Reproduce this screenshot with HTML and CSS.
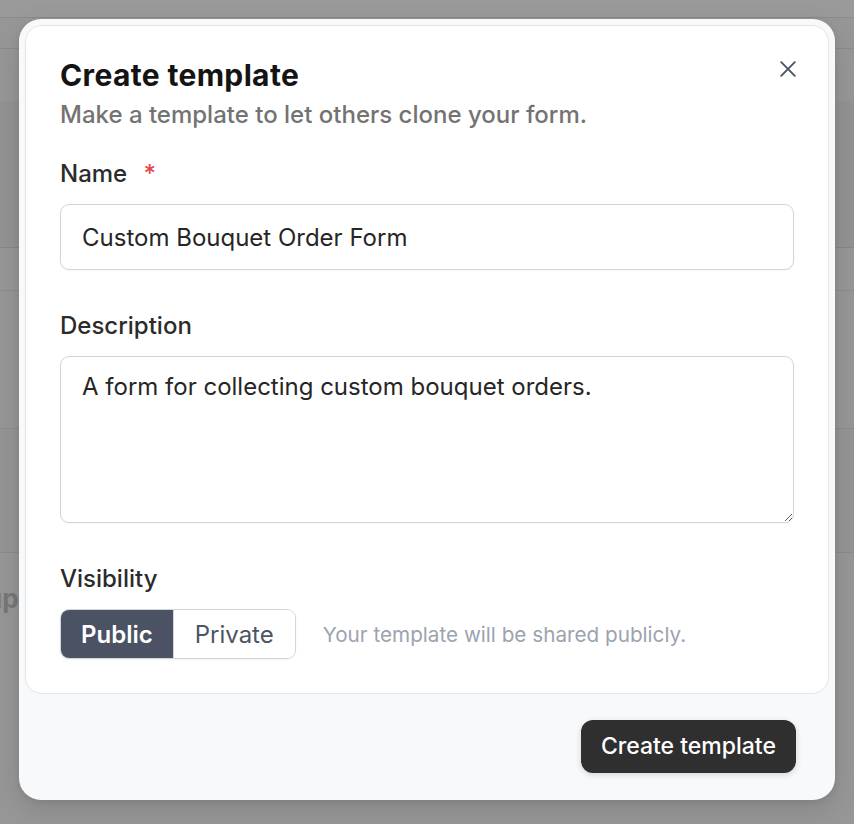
FILE: index.html
```html
<!DOCTYPE html>
<html lang="en">
<head>
<meta charset="utf-8">
<title>Create template</title>
<link rel="stylesheet" href="styles.css">
</head>
<body>
<div class="page">
  <div class="bg-header"></div>
  <div class="bg-row r1"></div>
  <div class="bg-row r2"></div>
  <div class="bg-row r3"></div>
  <div class="bg-row r4"></div>
  <div class="bg-row r5"></div>
  <div class="bg-row r6"></div>
  <div class="bg-row r7"><span class="bg-text">Setup</span></div>
</div>

<div class="modal" role="dialog" aria-labelledby="modal-title">
  <div class="card">
    <button class="close" aria-label="Close">
      <svg width="16" height="16" viewBox="0 0 16 16" fill="none" stroke="currentColor" stroke-width="1.9" stroke-linecap="round"><path d="M1.2 1.2L14.8 14.8M14.8 1.2L1.2 14.8"/></svg>
    </button>
    <h1 id="modal-title" class="title">Create template</h1>
    <p class="subtitle">Make a template to let others clone your form.</p>

    <label class="label label-name" for="name">Name <span class="req">*</span></label>
    <input id="name" class="input" type="text" value="Custom Bouquet Order Form">

    <label class="label label-desc" for="desc">Description</label>
    <textarea id="desc" class="textarea">A form for collecting custom bouquet orders.</textarea>

    <div class="label label-vis">Visibility</div>
    <div class="vis-row">
      <div class="segmented">
        <button class="seg seg-active">Public</button>
        <button class="seg">Private</button>
      </div>
      <span class="helper">Your template will be shared publicly.</span>
    </div>
  </div>
  <div class="footer">
    <button class="primary">Create template</button>
  </div>
</div>
</body>
</html>
```

FILE: styles.css
```css
* { box-sizing: border-box; }
html, body { margin: 0; padding: 0; }
body {
  width: 854px;
  height: 824px;
  overflow: hidden;
  background: #979797;
  font-family: Inter, "Noto Sans", "Liberation Sans", sans-serif;
  position: relative;
}

/* dimmed page behind the overlay */
.page { width: 100%; }
.bg-header { height: 18px; background: #9a9a9a; border-bottom: 1px solid #8b8b8b; }
.bg-row { border-bottom: 1px solid #8c8c8c; background: #979797; }
.r1 { height: 31px; }
.r2 { height: 52px; border-bottom: none; }
.r3 { height: 147px; background: #939393; border-bottom-color: #888; }
.r4 { height: 43px; }
.r5 { height: 138px; }
.r6 { height: 124px; background: #959595; }
.r7 { height: 280px; position: relative; }
.bg-text { position: absolute; left: -56px; top: 30px; font-size: 26px; font-weight: 700; color: #777; }

/* modal */
.modal {
  position: absolute;
  left: 19px;
  top: 19px;
  width: 816px;
  height: 781px;
  background: #f8f9fa;
  border-radius: 22px;
  padding: 6px 6px 0 6px;
  display: flex;
  flex-direction: column;
  box-shadow: 0 10px 30px rgba(0,0,0,0.12), 0 2px 6px rgba(0,0,0,0.08);
}
.card {
  position: relative;
  background: #fff;
  border: 1.5px solid #e4e5e7;
  border-radius: 17px;
  padding: 31px 34px 34px 34px;
  display: flex;
  flex-direction: column;
}
.close {
  position: absolute;
  top: 35px;
  right: 32px;
  width: 16px;
  height: 16px;
  padding: 0;
  border: none;
  background: none;
  color: #4b5563;
  display: flex;
}
.title {
  margin: 0;
  font-size: 30px;
  line-height: 36px;
  font-weight: 700;
  color: #141414;
  letter-spacing: 0.35px;
}
.subtitle {
  margin: 6px 0 0 0;
  font-size: 24px;
  line-height: 32px;
  color: #737373;
  font-weight: 500;
}
.label {
  display: block;
  font-size: 24px;
  line-height: 32px;
  font-weight: 500;
  color: #2b2b2b;
}
.label-name { margin-top: 27px; }
.req { color: #e5484d; margin-left: 10px; }
.label-desc { margin-top: 40px; }
.label-vis { margin-top: 40px; }
.input, .textarea {
  margin-top: 14px;
  width: 100%;
  border: 1.5px solid #d4d5d8;
  border-radius: 9px;
  background: #fff;
  font-family: inherit;
  font-size: 24px;
  color: #262626;
  padding: 0 21px;
  box-shadow: 0 1px 2px rgba(0,0,0,0.04);
  outline: none;
}
.input { height: 66px; }
.textarea {
  height: 167px;
  padding-top: 14px;
  line-height: 32px;
  resize: vertical;
}
.vis-row {
  margin-top: 14px;
  display: flex;
  align-items: center;
  gap: 27px;
}
.segmented {
  display: flex;
  border: 1.5px solid #d4d5d8;
  border-radius: 9px;
  overflow: hidden;
  height: 50px;
  box-shadow: 0 1px 2px rgba(0,0,0,0.05);
}
.seg {
  border: none;
  background: #fff;
  font-family: inherit;
  font-size: 24px;
  color: #4b5563;
  padding: 0 21px;
  height: 100%;
}
.seg + .seg { border-left: 1.5px solid #d4d5d8; }
.seg-active {
  background: #4b5263;
  color: #fff;
  font-weight: 600;
  padding: 0 20px;
}
.helper {
  font-size: 20.7px;
  color: #9ca3af;
}
.footer {
  flex: 1;
  display: flex;
  justify-content: flex-end;
  align-items: center;
  padding-right: 33px;
  padding-bottom: 2px;
}
.primary {
  height: 53px;
  padding: 0 20px;
  border: none;
  border-radius: 12px;
  background: #2f2f2f;
  color: #fff;
  font-family: inherit;
  font-size: 23px;
  font-weight: 500;
  box-shadow: 0 2px 6px rgba(0,0,0,0.15);
}
```
